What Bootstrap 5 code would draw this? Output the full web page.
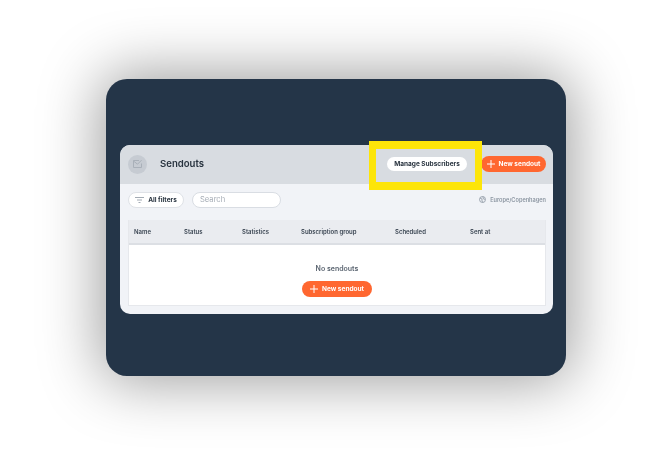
<!DOCTYPE html>
<html lang="en">
<head>
    <meta charset="UTF-8">
    <meta name="viewport" content="width=device-width, initial-scale=1.0">
    <title>Sendouts</title>
    <link href="https://cdn.jsdelivr.net/npm/bootstrap@5.3.0/dist/css/bootstrap.min.css" rel="stylesheet">
    <style>
        html, body {
            height: 100%;
        }
        body {
            padding: 79px 0 0 106px;
            background: #fff;
            font-family: Inter, "Liberation Sans", sans-serif;
            color: #22303f;
            overflow: hidden;
        }
        .dark-panel {
            width: 460px;
            height: 297px;
            padding: 66px 13px 0 14px;
            background: #243548;
            border-radius: 21px;
            box-shadow: 0 0 60px 6px rgba(0, 0, 0, .38);
        }
        .app-card {
            position: relative;
            height: 169px;
            background: #f1f3f7;
            border-radius: 10px;
            filter: blur(.4px);
        }
        .app-head {
            height: 39px;
            padding: 0 7px 1px 8px;
            background: #d8dce1;
            border-radius: 10px 10px 0 0;
        }
        .mail-circle {
            width: 19px;
            height: 19px;
            background: #c6cbd2;
            border-radius: 50%;
        }
        .app-title {
            margin-left: 13px;
            font-size: 9.6px;
            font-weight: 600;
            color: #27323e;
        }
        .pill {
            display: inline-flex;
            align-items: center;
            justify-content: center;
            border: 0;
            border-radius: 20px;
            padding: 2px 0 0;
            font-size: 6.5px;
            font-weight: 700;
            white-space: nowrap;
        }
        .pill svg {
            margin-top: -2px;
        }
        .pill-manage {
            width: 80px;
            height: 14px;
            margin-right: 14px;
            background: #fff;
            color: #27323e;
        }
        .pill-orange {
            height: 16px;
            gap: 4px;
            background: #ff6730;
            color: #fff;
        }
        .pill-top { width: 65px; }
        .pill-middle { width: 70px; }
        .highlight-box {
            position: absolute;
            left: 249px;
            top: -4px;
            width: 113px;
            height: 49px;
            border-style: solid;
            border-color: #fde509;
            border-width: 8px 7px;
        }
        .tool-row {
            height: 36px;
            padding: 0 7px 4px 8px;
        }
        .pill-filters {
            width: 56px;
            height: 16px;
            gap: 4px;
            margin-right: 8px;
            background: #fff;
            border: 1px solid #dfe2e7;
            color: #27323e;
        }
        .search-box {
            width: 89px;
            height: 16px;
            padding: 0 7px;
            background: #fff;
            border: 1px solid #d9dde3;
            border-radius: 20px;
            font-size: 7.6px;
            line-height: 14px;
            color: #a6adb6;
        }
        .zone-label {
            font-size: 5.6px;
            font-weight: 600;
            color: #8b95a1;
        }
        .table-wrap {
            margin: 0 7px 0 8px;
            height: 86px;
            background: #fff;
            border: 1px solid #e6e8ec;
            border-top: 0;
        }
        .send-table {
            margin: 0;
            table-layout: fixed;
            width: 100%;
        }
        .send-table th {
            height: 24px;
            padding: 0 0 0 5px;
            background: #eaecf0;
            border-bottom: 2px solid #dcdfe4;
            font-size: 6px;
            font-weight: 600;
            vertical-align: middle;
            color: #3a4552;
        }
        .empty-msg {
            height: 62px;
            padding-top: 19px;
        }
        .empty-msg p {
            margin: 0 0 8px;
            font-size: 7px;
            font-weight: 600;
            line-height: 9px;
            color: #5b6571;
        }
    </style>
</head>
<body>

<div class="dark-panel">
    <div class="app-card">
        <!-- Header -->
        <div class="app-head d-flex align-items-center">
            <div class="mail-circle d-flex align-items-center justify-content-center">
                <svg width="11" height="10" viewBox="0 0 11 10" fill="none" stroke="#a9b0b9" stroke-width="1"><path d="M7 1.500H1.500v7h8V4.500"/><path d="M1.500 2l4 3.200 4-4"/></svg>
            </div>
            <span class="app-title">Sendouts</span>
            <div class="ms-auto d-flex align-items-center">
                <button class="pill pill-manage">Manage Subscribers</button>
                <button class="pill pill-orange pill-top">
                    <svg width="8" height="8" viewBox="0 0 8 8" stroke="#fff" stroke-width="1"><path d="M4 0v8M0 4h8"/></svg>
                    New sendout
                </button>
            </div>
        </div>

        <!-- Yellow highlight -->
        <div class="highlight-box"></div>

        <!-- Filters -->
        <div class="tool-row d-flex align-items-center">
            <button class="pill pill-filters">
                <svg width="9" height="6" viewBox="0 0 9 6" stroke="#8b95a1" stroke-width=".8"><path d="M0 .5h9M2 3h5M3.500 5.500h2"/></svg>
                All filters
            </button>
            <div class="search-box">Search</div>
            <div class="zone-label ms-auto d-flex align-items-center gap-1">
                <svg width="7" height="7" viewBox="0 0 7 7" fill="none" stroke="#8b95a1" stroke-width=".8"><circle cx="3.500" cy="3.500" r="3"/><path d="M1 2l2 1v2l1 1.500M4 .5v2l2 1"/></svg>
                Europe/Copenhagen
            </div>
        </div>

        <!-- Table -->
        <div class="table-wrap">
            <table class="table send-table">
                <colgroup>
                    <col style="width: 50px">
                    <col style="width: 58px">
                    <col style="width: 59px">
                    <col style="width: 94px">
                    <col style="width: 75px">
                    <col>
                </colgroup>
                <thead>
                    <tr>
                        <th>Name</th>
                        <th>Status</th>
                        <th>Statistics</th>
                        <th>Subscription group</th>
                        <th>Scheduled</th>
                        <th>Sent at</th>
                    </tr>
                </thead>
            </table>
            <div class="empty-msg d-flex flex-column align-items-center">
                <p>No sendouts</p>
                <button class="pill pill-orange pill-middle">
                    <svg width="8" height="8" viewBox="0 0 8 8" stroke="#fff" stroke-width="1"><path d="M4 0v8M0 4h8"/></svg>
                    New sendout
                </button>
            </div>
        </div>
    </div>
</div>

<script src="https://cdn.jsdelivr.net/npm/bootstrap@5.3.0/dist/js/bootstrap.bundle.min.js"></script>
</body>
</html>
